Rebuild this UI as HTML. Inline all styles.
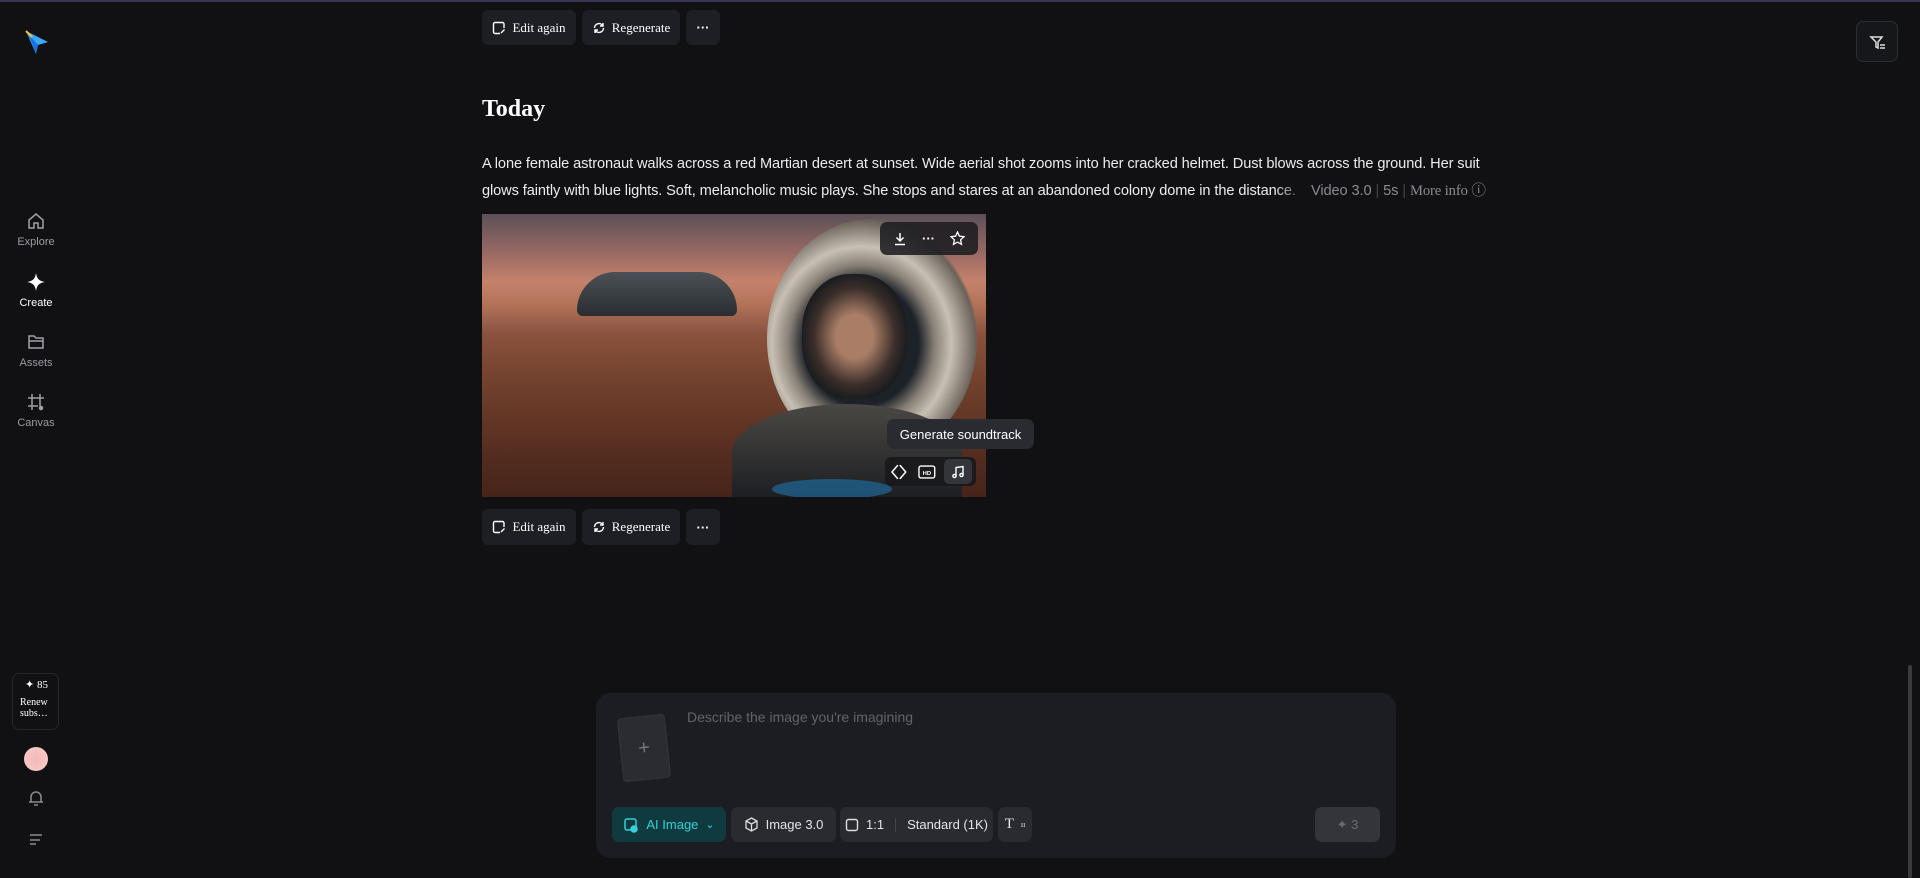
<!DOCTYPE html>
<html><head><meta charset="utf-8"><style>
*{box-sizing:border-box;margin:0;padding:0}
body{width:1920px;height:878px;background:#111114;overflow:hidden;position:relative;font-family:"Liberation Sans",sans-serif;color:#e8e8ea}
.abs{position:absolute}
.btn{position:absolute;background:#1e1f24;border-radius:6px;display:flex;align-items:center;justify-content:center;gap:6px;font-family:"Liberation Serif",serif;font-size:13px;color:#fff}
.nav{position:absolute;left:0;width:72px;text-align:center;font-size:11px;color:#9a9ba2}
.nav svg{display:block;margin:0 auto 5px}
.chip{position:absolute;top:807px;height:35px;background:#2a2b31;border-radius:7px;display:flex;align-items:center;justify-content:center;gap:7px;font-size:13px;color:#e4e4e8}
</style></head><body>
<div class="abs" style="left:0;top:0;width:1920px;height:2px;background:#3a3352"></div>

<svg class="abs" style="left:24px;top:28px" width="26" height="28" viewBox="0 0 26 28"><path d="M2 3 L24 14 L14 17 L12 26 Z" fill="#3aa8f5"/><path d="M2 3 L6 10 L12 26 L14 17Z" fill="#1a6fe0"/><path d="M2 3 L8 9" stroke="#f5c13a" stroke-width="2"/></svg>

<div class="nav" style="top:211px"><svg width="20" height="20" viewBox="0 0 20 20" fill="none" stroke="#a0a1a8" stroke-width="1.5"><path d="M3 9 L10 3 L17 9 V17 H12 V12 H8 V17 H3Z"/></svg>Explore</div>
<div class="nav" style="top:272px;color:#fff"><svg width="20" height="20" viewBox="0 0 20 20"><path d="M10 1 C11 7 13 9 19 10 C13 11 11 13 10 19 C9 13 7 11 1 10 C7 9 9 7 10 1Z" fill="#fff"/></svg>Create</div>
<div class="nav" style="top:332px"><svg width="20" height="20" viewBox="0 0 20 20" fill="none" stroke="#a0a1a8" stroke-width="1.5"><path d="M3 4 H8 L10 6 H17 V16 H3Z M3 9 H17"/></svg>Assets</div>
<div class="nav" style="top:392px"><svg width="20" height="20" viewBox="0 0 20 20" fill="none" stroke="#a0a1a8" stroke-width="1.5"><path d="M6 2 V18 M14 2 V14 M2 6 H18 M2 14 H12"/><circle cx="15" cy="16" r="1.5" fill="#a0a1a8"/></svg>Canvas</div>

<div class="abs" style="left:12px;top:673px;width:47px;height:57px;border:1px solid #26272c;border-radius:7px;font-family:'Liberation Serif',serif;font-size:10px;color:#fff;padding:6px 0 0 7px;line-height:11px"><div style="font-size:11px;margin-left:5px;margin-bottom:6px">✦ 85</div>Renew<br>subs…</div>
<div class="abs" style="left:24px;top:747px;width:24px;height:24px;border-radius:50%;background:radial-gradient(circle,#f3b8b8,#f7cfcb)"></div>
<svg class="abs" style="left:28px;top:789px" width="16" height="18" viewBox="0 0 16 18" fill="none" stroke="#8a8b92" stroke-width="1.5"><path d="M3 13 V8 a5 5 0 0 1 10 0 V13 H1 H15 M6 16 H10"/></svg>
<svg class="abs" style="left:28px;top:832px" width="16" height="14" viewBox="0 0 16 14" stroke="#8a8b92" stroke-width="1.6"><path d="M2 3 H14 M2 8 H12 M2 12 H8"/></svg>

<div class="abs" style="left:1856px;top:21px;width:42px;height:41px;border:1px solid #2c2d33;border-radius:7px;background:#16171b"><svg style="margin:12px 0 0 12px" width="18" height="18" viewBox="0 0 18 18" fill="none" stroke="#ddd" stroke-width="1.5"><path d="M2 3 H13 L9 8 V14 L7 13 V8 Z M11 11 H16 M11 14 H16"/></svg></div>
<div class="abs" style="left:1908px;top:665px;width:4px;height:213px;background:#3a3b40;border-radius:2px"></div>

<div class="btn" style="left:482px;top:10px;width:94px;height:35px"><svg width="14" height="14" viewBox="0 0 14 14" fill="none" stroke="#fff" stroke-width="1.4"><path d="M12 7 V3 a1.5 1.5 0 0 0-1.5-1.5 H3 A1.5 1.5 0 0 0 1.5 3 V11 A1.5 1.5 0 0 0 3 12.5 H8 M9 12 L12.5 8.5"/></svg>Edit again</div>
<div class="btn" style="left:582px;top:10px;width:98px;height:35px"><svg width="14" height="14" viewBox="0 0 14 14" fill="none" stroke="#fff" stroke-width="1.4"><path d="M2.5 7 A4.5 4.5 0 0 1 11 5 M11.5 7 A4.5 4.5 0 0 1 3 9 M11 2 V5 H8 M3 12 V9 H6"/></svg>Regenerate</div>
<div class="btn" style="left:686px;top:10px;width:34px;height:35px;font-family:'Liberation Sans';font-weight:bold">···</div>

<div class="abs" style="left:482px;top:96px;font-family:'Liberation Serif',serif;font-weight:bold;font-size:24px;color:#fff">Today</div>
<div class="abs" style="left:482px;top:151px;width:1010px;font-size:14.6px;line-height:27px;color:#ececef;letter-spacing:-0.1px">A lone female astronaut walks across a red Martian desert at sunset. Wide aerial shot zooms into her cracked helmet. Dust blows across the ground. Her suit<br><span style="display:inline-block;width:826px;white-space:nowrap;overflow:hidden;vertical-align:top;-webkit-mask-image:linear-gradient(90deg,#000 96%,transparent)">glows faintly with blue lights. Soft, melancholic music plays. She stops and stares at an abandoned colony dome in the distance.</span><span style="color:#8a8b92;margin-left:3px">Video 3.0 <span style="color:#444">|</span> 5s <span style="color:#444">|</span> <span style="font-family:'Liberation Serif',serif">More info ⓘ</span></span></div>

<div class="abs" style="left:482px;top:214px;width:504px;height:283px;overflow:hidden;background:linear-gradient(180deg,#5c5058 0%,#9a6a64 14%,#c4826a 24%,#b27258 32%,#8a5440 42%,#7a4a34 58%,#6a3c2a 78%,#4a2a1e 100%)">
 <div class="abs" style="left:95px;top:58px;width:160px;height:44px;border-radius:80px 80px 12px 12px;background:linear-gradient(180deg,#4a5056,#2a2e32)"></div>
 <div class="abs" style="left:0;top:120px;width:504px;height:163px;background:linear-gradient(180deg,rgba(140,80,55,.5),rgba(70,35,25,.9))"></div>
 <div class="abs" style="left:285px;top:5px;width:210px;height:240px;border-radius:50%;background:radial-gradient(ellipse at 45% 52%,#1c2228 35%,#8a8278 45%,#c8c0b4 55%,#6a625a 70%,transparent 72%)"></div>
 <div class="abs" style="left:320px;top:60px;width:105px;height:125px;border-radius:45%;background:radial-gradient(ellipse,#a97d66 25%,#3a2e2a 55%,#15191d 75%)"></div>
 <div class="abs" style="left:250px;top:190px;width:230px;height:100px;border-radius:50% 50% 0 0;background:linear-gradient(180deg,#4a4844,#1a1c20)"></div>
 <div class="abs" style="left:290px;top:265px;width:120px;height:20px;border-radius:50%;background:#1f6a9a;opacity:.7"></div>
</div>
<div class="abs" style="left:880px;top:222px;width:98px;height:33px;background:rgba(28,28,32,.88);border-radius:7px;display:flex;align-items:center;justify-content:space-around;padding:0 6px;color:#fff">
 <svg width="14" height="14" viewBox="0 0 14 14" fill="none" stroke="#fff" stroke-width="1.5"><path d="M7 1 V9 M3.5 5.5 L7 9 L10.5 5.5 M2 12.5 H12"/></svg>
 <span style="font-weight:bold;font-size:13px">···</span>
 <svg width="15" height="15" viewBox="0 0 15 15" fill="none" stroke="#fff" stroke-width="1.3"><path d="M7.5 1 L9.4 5.2 L14 5.7 L10.6 8.8 L11.5 13.4 L7.5 11.1 L3.5 13.4 L4.4 8.8 L1 5.7 L5.6 5.2Z"/></svg>
</div>
<div class="abs" style="left:887px;top:419px;width:147px;height:30px;background:#2a2b30;border-radius:7px;font-size:13px;color:#fff;display:flex;align-items:center;justify-content:center">Generate soundtrack</div>
<div class="abs" style="left:885px;top:457px;width:91px;height:29px;background:rgba(24,24,28,.9);border-radius:6px;display:flex;align-items:center;padding:0 4px;gap:7px">
 <svg width="20" height="20" viewBox="0 0 20 20" fill="none" stroke="#fff" stroke-width="1.5"><path d="M9 3 L3 10 L9 17 M11 3 L17 10 L11 17"/></svg>
 <svg width="22" height="20" viewBox="0 0 22 20" fill="none" stroke="#fff" stroke-width="1.4"><rect x="3" y="4" width="16" height="12" rx="2"/><text x="11" y="13" font-size="6" fill="#fff" stroke="none" text-anchor="middle" font-family="Liberation Sans" font-weight="bold">HD</text></svg>
 <div style="width:28px;height:25px;background:#34353b;border-radius:5px;display:flex;align-items:center;justify-content:center"><svg width="14" height="14" viewBox="0 0 14 14" fill="none" stroke="#fff" stroke-width="1.4"><path d="M5 11 V2.5 L12 1.5 V10"/><circle cx="3.5" cy="11" r="1.6"/><circle cx="10.5" cy="10" r="1.6"/></svg></div>
</div>

<div class="btn" style="left:482px;top:509px;width:94px;height:36px"><svg width="14" height="14" viewBox="0 0 14 14" fill="none" stroke="#fff" stroke-width="1.4"><path d="M12 7 V3 a1.5 1.5 0 0 0-1.5-1.5 H3 A1.5 1.5 0 0 0 1.5 3 V11 A1.5 1.5 0 0 0 3 12.5 H8 M9 12 L12.5 8.5"/></svg>Edit again</div>
<div class="btn" style="left:582px;top:509px;width:98px;height:36px"><svg width="14" height="14" viewBox="0 0 14 14" fill="none" stroke="#fff" stroke-width="1.4"><path d="M2.5 7 A4.5 4.5 0 0 1 11 5 M11.5 7 A4.5 4.5 0 0 1 3 9 M11 2 V5 H8 M3 12 V9 H6"/></svg>Regenerate</div>
<div class="btn" style="left:686px;top:509px;width:34px;height:36px;font-family:'Liberation Sans';font-weight:bold">···</div>

<div class="abs" style="left:596px;top:693px;width:800px;height:165px;background:#1c1d22;border-radius:15px"></div>
<div class="abs" style="left:620px;top:716px;width:48px;height:64px;background:#2b2c32;border:1px solid #34353b;border-radius:4px;transform:rotate(-6deg);color:#777;font-size:20px;display:flex;align-items:center;justify-content:center">+</div>
<div class="abs" style="left:687px;top:709px;font-size:14px;color:#62636a">Describe the image you're imagining</div>
<div class="chip" style="left:612px;width:114px;background:#0f3a40;color:#35d0d8"><svg width="16" height="16" viewBox="0 0 16 16" fill="none" stroke="#35d0d8" stroke-width="1.5"><rect x="2" y="2" width="11" height="11" rx="2"/><circle cx="11" cy="12" r="3" fill="#35d0d8"/></svg>AI Image <span style="font-size:11px">⌄</span></div>
<div class="chip" style="left:731px;width:105px"><svg width="15" height="15" viewBox="0 0 15 15" fill="none" stroke="#ddd" stroke-width="1.3"><path d="M7.5 1 L13 4 V11 L7.5 14 L2 11 V4Z M2 4 L7.5 7 L13 4 M7.5 7 V14"/></svg>Image 3.0</div>
<div class="chip" style="left:840px;width:153px"><svg width="14" height="14" viewBox="0 0 14 14" fill="none" stroke="#ddd" stroke-width="1.4"><rect x="1.5" y="1.5" width="11" height="11" rx="2"/></svg>1:1 <span style="width:1px;height:14px;background:#444;margin:0 4px"></span>Standard (1K)</div>
<div class="chip" style="left:998px;width:34px;font-family:'Liberation Serif',serif;font-size:15px">T<sub style="font-size:8px">ıı</sub></div>
<div class="chip" style="left:1315px;width:65px;background:#34353b;color:#6a6b72">✦ 3</div>
</body></html>
